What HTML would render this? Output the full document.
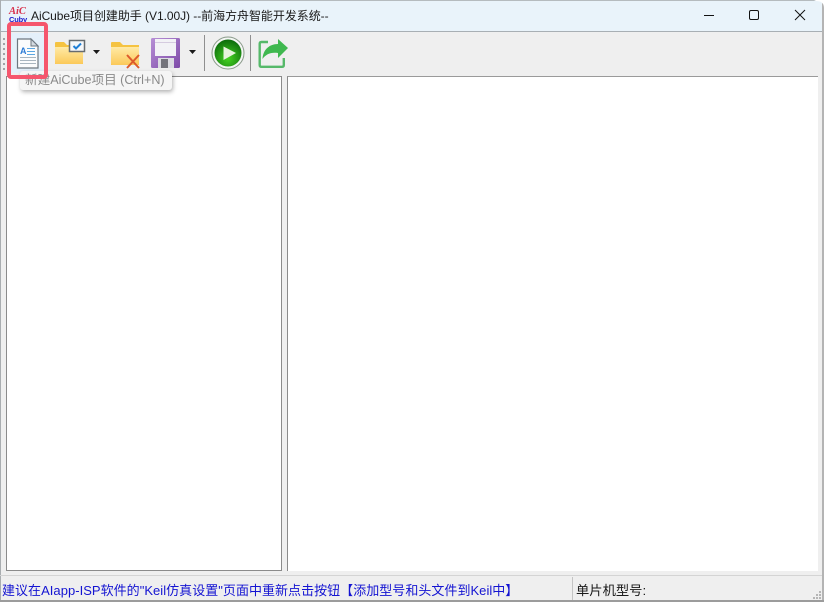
<!DOCTYPE html>
<html>
<head>
<meta charset="utf-8">
<style>
html,body{margin:0;padding:0;background:#fff}
#w{position:relative;width:824px;height:602px;overflow:hidden;background:#efefef;font-family:"Liberation Sans","Noto Sans CJK SC",sans-serif}
#w div,#w svg,#w span{position:absolute}
.t{white-space:nowrap}
</style>
</head>
<body>
<div id="w">
<div style="left:0;top:0;width:824px;height:31px;background:#e9f3fa"></div>
<div style="left:0;top:31px;width:824px;height:1px;background:#a8afb4"></div>
<div style="left:0;top:0;width:824px;height:1px;background:#b5bbbe"></div>
<div style="left:0;top:0;width:1px;height:602px;background:#a9adb0"></div>
<div style="right:0;top:0;width:2px;height:602px;background:#b4b4b4"></div>
<svg style="right:0;top:0" width="10" height="8" viewBox="0 0 10 8"><path d="M0 0H10V8C10 3 7 1 2 1Z" fill="#fff"/></svg>

<!-- app icon -->
<div class="t" style="left:9px;top:6px;font:italic bold 10.500px/11px 'Liberation Serif';color:#d8304a">AiC</div>
<div class="t" style="left:9px;top:15px;font:bold 7.500px/9px 'Liberation Sans';color:#1a1acb;letter-spacing:-.2px">Cuby</div>

<div class="t" style="left:31px;top:8px;font-size:12px;line-height:16px;color:#1a1a1a;letter-spacing:-.05px">AiCube项目创建助手 (V1.00J) --前海方舟智能开发系统--</div>

<!-- window controls -->
<svg style="left:624px;top:0" width="200" height="31" viewBox="0 0 200 31" fill="none" stroke="#111" stroke-width="1">
<path d="M80 15.500H90"/>
<rect x="125.500" y="10.500" width="9" height="9" rx="1.500"/>
<path d="M171 10L181 20M181 10L171 20"/>
</svg>

<!-- toolbar -->
<div style="left:9px;top:33px;width:36px;height:40px;background:#e4f0fa"></div>
<svg style="left:0;top:32px" width="8" height="40"><g fill="#9fa3a6"><rect x="3" y="6" width="2" height="2"/><rect x="3" y="11" width="2" height="2"/><rect x="3" y="16" width="2" height="2"/><rect x="3" y="21" width="2" height="2"/><rect x="3" y="26" width="2" height="2"/><rect x="3" y="31" width="2" height="2"/><rect x="3" y="36" width="2" height="2"/></g></svg>

<!-- new doc -->
<svg style="left:15px;top:36px" width="26" height="33" viewBox="0 0 26 33">
<path d="M2.500 3H16L23 10V32H2.500Z" fill="#fbfcfd" stroke="#6d7780" stroke-width="1.200"/>
<path d="M16 3V10H23Z" fill="#d3dae0" stroke="#6d7780" stroke-width="1"/>
<text x="5" y="18" font-family="Liberation Sans" font-weight="bold" font-size="9" fill="#2a7ad6">A</text>
<path d="M12 12.500H20M12 15.500H20M12 18.500H20" stroke="#5ba7e2" stroke-width="1"/>
<path d="M5 21.500H21M5 24.500H21M5 27.500H21" stroke="#a9b6c0" stroke-width="1"/>
</svg>

<!-- open folder -->
<svg style="left:54px;top:38px" width="32" height="28" viewBox="0 0 32 28">
<defs><linearGradient id="f" x1="0" y1="0" x2="0" y2="1"><stop offset="0" stop-color="#ffeaa6"/><stop offset="1" stop-color="#fbc95a"/></linearGradient></defs>
<path d="M1 5Q1 4 2 4H10L13 7H29V26H1Z" fill="#f5c341"/>
<path d="M1 9H29V25Q29 26 28 26H2Q1 26 1 25Z" fill="url(#f)"/>
<rect x="15.500" y="2.500" width="15" height="11" fill="#f5f7f9" stroke="#666c70" stroke-width="1.500"/>
<path d="M19.500 8L22 10.500L27 5.500" fill="none" stroke="#1f7fd6" stroke-width="2"/>
</svg>
<svg style="left:92px;top:49px" width="10" height="6"><path d="M1 1H8L4.500 5Z" fill="#1a1a1a"/></svg>

<!-- close folder -->
<svg style="left:110px;top:40px" width="32" height="29" viewBox="0 0 32 29">
<path d="M1 3Q1 2 2 2H10L13 5H29V25H1Z" fill="#f5c341"/>
<path d="M1 7H29V24Q29 25 28 25H2Q1 25 1 24Z" fill="url(#f)"/>
<path d="M17 15L29 28M29 15L17 28" stroke="#dd5a2c" stroke-width="2" fill="none"/>
</svg>

<!-- save -->
<svg style="left:150px;top:37px" width="31" height="32" viewBox="0 0 31 32">
<defs>
<linearGradient id="p" x1="0" y1="0" x2="1" y2="1"><stop offset="0" stop-color="#b78fd6"/><stop offset="1" stop-color="#7d4aa8"/></linearGradient>
</defs>
<rect x="1" y="1" width="29" height="30" rx="1.500" fill="url(#p)"/>
<rect x="5" y="2" width="21" height="17" fill="#f2f2f6"/>
<path d="M5 5.500H26" stroke="#d5cbe0"/>
<rect x="8" y="21" width="16" height="10" fill="#dcdce2"/>
<rect x="11" y="22" width="7" height="9" fill="#74747c"/>
</svg>
<svg style="left:188px;top:49px" width="10" height="6"><path d="M1 1H8L4.500 5Z" fill="#1a1a1a"/></svg>

<div style="left:204px;top:35px;width:1px;height:36px;background:#8f8f8f"></div>
<div style="left:250px;top:35px;width:1px;height:36px;background:#8f8f8f"></div>

<!-- run -->
<svg style="left:211px;top:36px" width="34" height="34" viewBox="0 0 34 34">
<defs><radialGradient id="g" cx="0.500" cy="0.700" r="0.700"><stop offset="0" stop-color="#45d321"/><stop offset="1" stop-color="#0b6a0b"/></radialGradient></defs>
<circle cx="17" cy="17" r="16" fill="#f4f6f4" stroke="#8a9a8a" stroke-width="1"/>
<circle cx="17" cy="17" r="13.500" fill="url(#g)"/>
<path d="M12.500 10.500L25 17L12.500 24Z" fill="#e6f4dc"/>
</svg>

<!-- export -->
<svg style="left:258px;top:38px" width="31" height="31" viewBox="0 0 31 31">
<path d="M10 4H3.500Q1.700 4 1.700 5.800V27Q1.700 28.800 3.500 28.800H24Q25.800 28.800 25.800 27V20" fill="none" stroke="#56b96a" stroke-width="2.400"/>
<path d="M20 1L30 10L20 20V15C13 14 8 16 4.500 21C5 12 11 6 20 6Z" fill="#3fb84f"/>
</svg>

<!-- panes -->
<div style="left:6px;top:76px;width:274px;height:493px;background:#fff;border:1px solid #8b8b8b"></div>
<div style="left:287px;top:76px;width:530px;height:494px;background:#fff;border-left:1px solid #8b8b8b;border-top:1px solid #9a9a9a"></div>

<!-- tooltip -->
<div style="left:20px;top:71px;width:152px;height:19px;background:#f5f5f5;border-radius:3px;box-shadow:1px 2px 4px rgba(0,0,0,.3)"></div>
<div class="t" style="left:25px;top:72px;font-size:12.600px;line-height:16px;color:#8a8a8a">新建AiCube项目 (Ctrl+N)</div>

<!-- highlight -->
<div style="left:7px;top:22px;width:33px;height:49px;border:4px solid #f5566d;border-radius:4px"></div>

<!-- status -->
<div style="left:0;top:575px;width:822px;height:1px;background:#d4d4d4"></div>
<div style="left:572px;top:577px;width:1px;height:23px;background:#c4c4c4"></div>
<div class="t" style="left:2px;top:582px;font-size:13px;line-height:17px;color:#1414d2;letter-spacing:.03px">建议在AIapp-ISP软件的"Keil仿真设置"页面中重新点击按钮【添加型号和头文件到Keil中】</div>
<div class="t" style="left:576px;top:582px;font-size:13.300px;line-height:17px;color:#1a1a1a">单片机型号:</div>
<svg style="left:812px;top:590px" width="10" height="10"><g fill="#b5b5b5"><rect x="7" y="1" width="2" height="2"/><rect x="4" y="4" width="2" height="2"/><rect x="7" y="4" width="2" height="2"/><rect x="1" y="7" width="2" height="2"/><rect x="4" y="7" width="2" height="2"/><rect x="7" y="7" width="2" height="2"/></g></svg>
<div style="left:0;top:600px;width:824px;height:2px;background:#9c9c9c"></div>
</div>
</body>
</html>
